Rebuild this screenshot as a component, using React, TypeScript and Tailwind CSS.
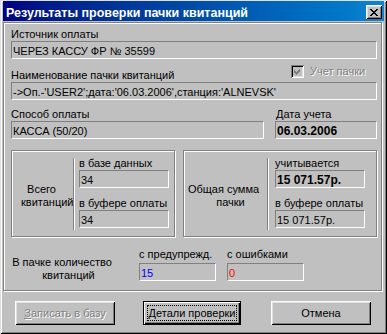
const sunken =
  'h-[18px] border border-t-[#808080] border-l-[#808080] border-b-white border-r-white bg-[#c0c0c0] pl-[1px] pt-[2px] leading-[14px] whitespace-nowrap overflow-hidden'
const etched = 'border border-[#808080] shadow-[inset_1px_1px_#fff,1px_1px_#fff]'
const raised =
  'shadow-[inset_1px_1px_#fff,inset_-1px_-1px_#000,inset_2px_2px_#dfdfdf,inset_-2px_-2px_#808080] bg-[#c0c0c0]'
const disabledText = 'text-[#808080] [text-shadow:1px_1px_#fff]'

// win98 close glyph, 8x7 pixels
const closeRows = ['##....##', '.##..##.', '..####..', '...##...', '..####..', '.##..##.', '##....##']

function CloseGlyph() {
  return (
    <svg width="8" height="7" viewBox="0 0 8 7" shapeRendering="crispEdges">
      {closeRows.map((row, y) =>
        row.split('').map((c, x) => (c === '#' ? <rect key={`${x}-${y}`} x={x} y={y} width="1" height="1" fill="#000" /> : null))
      )}
    </svg>
  )
}

function CheckBox() {
  return (
    <div className="w-[13px] h-[13px] bg-[#c0c0c0] shadow-[inset_1px_1px_#808080,inset_-1px_-1px_#fff,inset_2px_2px_#000,inset_-2px_-2px_#dfdfdf] flex items-center justify-center">
      <svg width="7" height="7" viewBox="0 0 7 7" shapeRendering="crispEdges">
        <polygon points="0,2 2,4 6,0 6,3 2,7 0,5" fill="#808080" />
      </svg>
    </div>
  )
}

export default function App() {
  return (
    <div className="w-[387px] h-[334px] bg-[#c0c0c0] pt-[1px] pl-[3px] shadow-[inset_1px_1px_#dfdfdf,inset_-1px_-1px_#000,inset_2px_2px_#fff,inset_-2px_-2px_#808080] text-[11px] leading-[14px] text-black font-['Liberation_Sans',Arial,sans-serif] overflow-hidden">
      {/* title bar */}
      <div className="w-[381px] h-[20px] bg-linear-to-r from-[#000080] to-[#1084d0] flex items-start justify-between">
        <div className="mt-[5px] ml-[3px] text-white font-bold text-[12.5px] leading-[14px] whitespace-nowrap">
          Результаты проверки пачки квитанций
        </div>
        <div className={`mt-[4px] mr-[2px] w-[16px] h-[14px] flex items-center justify-center ${raised}`}>
          <CloseGlyph />
        </div>
      </div>

      {/* main panel */}
      <div className={`mt-[1px] w-[379px] h-[269px] pl-[7px] pt-[4px] ${etched}`}>
        <div className="h-[14px]">Источник оплаты</div>
        <div className={`w-[366px] ${sunken}`}>ЧЕРЕЗ КАССУ ФР № 35599</div>

        <div className="mt-[9px] h-[14px] flex items-start">
          <div className="w-[280px]">Наименование пачки квитанций</div>
          <div className="-mt-[4px] flex items-center gap-[6px]">
            <CheckBox />
            <span className={disabledText}>Учет пачки</span>
          </div>
        </div>
        <div className={`w-[366px] ${sunken}`}>-&gt;Оп.-'USER2';дата:'06.03.2006',станция:'ALNEVSK'</div>

        <div className="mt-[8px] flex">
          <div className="w-[264px]">
            <div className="h-[13px] leading-[13px]">Способ оплаты</div>
            <div className={`w-[253px] ${sunken}`}>КАССА (50/20)</div>
          </div>
          <div>
            <div className="h-[13px] leading-[13px] pl-[1px]">Дата учета</div>
            <div className={`w-[102px] ${sunken} font-bold text-[12px]`}>06.03.2006</div>
          </div>
        </div>

        {/* totals groups */}
        <div className="mt-[11px] flex">
          <div className={`w-[164px] h-[87px] flex items-start ${etched}`}>
            <div className="w-[61px] mt-[32px] text-center leading-[13px]">
              <div className="pr-[2px]">Всего</div>
              <div className="pl-[9px]">квитанций</div>
            </div>
            <div className="mt-[7px] h-[72px] w-[2px] border-l border-l-[#808080] border-r border-r-white" />
            <div className="ml-[4px] pt-[5px]">
              <div className="h-[14px]">в базе данных</div>
              <div className={`w-[90px] ${sunken}`}>34</div>
              <div className="mt-[8px] h-[14px]">в буфере оплаты</div>
              <div className={`w-[90px] ${sunken}`}>34</div>
            </div>
          </div>

          <div className={`ml-[8px] w-[194px] h-[87px] flex items-start ${etched}`}>
            <div className="w-[83px] mt-[32px] text-center leading-[13px]">
              <div className="pr-[4px]">Общая сумма</div>
              <div className="pl-[10px]">пачки</div>
            </div>
            <div className="mt-[7px] h-[72px] w-[2px] border-l border-l-[#808080] border-r border-r-white" />
            <div className="ml-[6px] pt-[5px]">
              <div className="h-[14px]">учитывается</div>
              <div className={`w-[90px] ${sunken} font-bold text-[12px]`}>15 071.57р.</div>
              <div className="mt-[8px] h-[14px]">в буфере оплаты</div>
              <div className={`w-[90px] ${sunken}`}>15 071.57р.</div>
            </div>
          </div>
        </div>

        {/* counts row */}
        <div className="flex items-start">
          <div className="w-[102px] mt-[19px] text-center leading-[13px]">
            <div>В пачке количество</div>
            <div className="pl-[13px]">квитанций</div>
          </div>
          <div className="ml-[26px] mt-[10px]">
            <div className="h-[16px]">с предупрежд.</div>
            <div className={`w-[77px] ${sunken} text-[#0000ff]`}>15</div>
          </div>
          <div className="ml-[11px] mt-[10px]">
            <div className="h-[16px]">с ошибками</div>
            <div className={`w-[77px] ${sunken} text-[#ff0000]`}>0</div>
          </div>
        </div>
      </div>

      {/* buttons */}
      <div className="mt-[10px] pl-[12px] flex items-start">
        <div className={`w-[100px] h-[24px] flex items-center justify-center ${raised} ${disabledText}`}>
          <span>
            <span className="underline">З</span>аписать в базу
          </span>
        </div>
        <div className="ml-[28px] w-[98px] h-[24px] border border-black shadow-[inset_1px_1px_#fff,inset_-1px_-1px_#000,inset_-2px_-2px_#808080] bg-[#c0c0c0] p-[3px]">
          <div className="h-full border border-dotted border-black flex items-center justify-center whitespace-nowrap">
            <span>
              <span className="underline">Д</span>етали проверки
            </span>
          </div>
        </div>
        <div className={`ml-[30px] w-[100px] h-[24px] flex items-center justify-center ${raised}`}>Отмена</div>
      </div>
    </div>
  )
}
